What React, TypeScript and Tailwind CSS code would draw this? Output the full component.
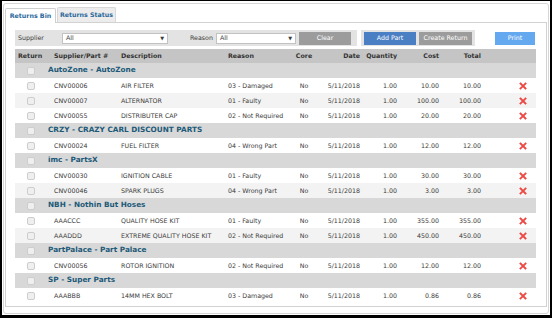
import React from "react";

type Item = {
  part: string;
  desc: string;
  reason: string;
  cost: string;
};

type Group = {
  name: string;
  items: Item[];
};

const groups: Group[] = [
  {
    name: "AutoZone - AutoZone",
    items: [
      { part: "CNV00006", desc: "AIR FILTER", reason: "03 - Damaged", cost: "10.00" },
      { part: "CNV00007", desc: "ALTERNATOR", reason: "01 - Faulty", cost: "100.00" },
      { part: "CNV00055", desc: "DISTRIBUTER CAP", reason: "02 - Not Required", cost: "20.00" },
    ],
  },
  {
    name: "CRZY - CRAZY CARL DISCOUNT PARTS",
    items: [{ part: "CNV00024", desc: "FUEL FILTER", reason: "04 - Wrong Part", cost: "12.00" }],
  },
  {
    name: "imc - PartsX",
    items: [
      { part: "CNV00030", desc: "IGNITION CABLE", reason: "01 - Faulty", cost: "30.00" },
      { part: "CNV00046", desc: "SPARK PLUGS", reason: "04 - Wrong Part", cost: "3.00" },
    ],
  },
  {
    name: "NBH - Nothin But Hoses",
    items: [
      { part: "AAACCC", desc: "QUALITY HOSE KIT", reason: "01 - Faulty", cost: "355.00" },
      { part: "AAADDD", desc: "EXTREME QUALITY HOSE KIT", reason: "02 - Not Required", cost: "450.00" },
    ],
  },
  {
    name: "PartPalace - Part Palace",
    items: [{ part: "CNV00056", desc: "ROTOR IGNITION", reason: "02 - Not Required", cost: "12.00" }],
  },
  {
    name: "SP - Super Parts",
    items: [{ part: "AAABBB", desc: "14MM HEX BOLT", reason: "03 - Damaged", cost: "0.86" }],
  },
];

function Check() {
  return <span className="block w-[8px] h-[8px] rounded-[2px] border border-[#cdcdcd] bg-[#efefef]"></span>;
}

function RedX() {
  return (
    <svg width="8" height="8" viewBox="0 0 8 8">
      <path d="M1.5 1.5 L6.5 6.5 M6.5 1.5 L1.5 6.5" stroke="#ec4a44" strokeWidth="1.9" strokeLinecap="square" />
    </svg>
  );
}

function Select({ width }: { width: string }) {
  return (
    <div className={`${width} h-[11px] bg-white border border-[#c2c2c2] flex items-center justify-between px-[3px]`}>
      <span>All</span>
      <span className="text-[5px] leading-none">▼</span>
    </div>
  );
}

export default function App() {
  return (
    <div
      className="w-[552px] h-[318px] bg-white border-t border-l-2 border-r-2 border-b-[3px] border-black pt-[2px] pl-px pr-px pb-px text-[6.3px] text-[#3a3a3a]"
      style={{ fontFamily: '"DejaVu Sans", Verdana, sans-serif' }}
    >
      <div className="w-[546px] h-[311px] border border-[#d6d6d6] rounded-[3px] pt-[3px] pl-px">
        {/* tabs */}
        <div className="flex h-[15px] items-end">
          <div className="h-[15px] w-[51px] border border-b-0 border-[#cfcfcf] bg-white rounded-t-[2px] flex items-center justify-center font-bold text-[#2a6a9c] relative top-px">
            Returns Bin
          </div>
          <div className="h-[15px] w-[59px] ml-px border border-b-0 border-[#d8d8d8] bg-[#ececec] rounded-t-[2px] flex items-center justify-center font-bold text-[#2a6a9c]">
            Returns Status
          </div>
        </div>

        {/* panel */}
        <div className="w-[542px] h-[285px] border border-[#d2d2d2] pt-[7px] pl-[9px]">
          {/* filter bar */}
          <div className="flex items-center h-[16px]">
            <div className="flex items-center h-[16px] w-[342px] bg-[#e3e3e3] pl-[3px]">
              <span className="w-[44px]">Supplier</span>
              <Select width="w-[106px]" />
              <span className="ml-[22px] w-[26px]">Reason</span>
              <Select width="w-[80px]" />
              <div className="ml-[3px] w-[52px] h-[13px] bg-[#9c9c9c] text-white flex items-center justify-center">Clear</div>
            </div>
            <div className="ml-[4px] flex items-center gap-[3px] h-[16px] w-[114px] bg-[#e3e3e3] pl-[3px]">
              <div className="w-[52px] h-[13px] bg-[#4b7fc4] text-white flex items-center justify-center">Add Part</div>
              <div className="w-[53px] h-[13px] bg-[#9c9c9c] text-white flex items-center justify-center">Create Return</div>
            </div>
            <div className="ml-[20px] w-[40px] h-[13px] bg-[#64a9f0] text-white flex items-center justify-center">Print</div>
          </div>

          {/* table */}
          <div className="mt-[3px] w-[521px]">
            <div className="flex items-center h-[14px] bg-[#c5c5c5] font-bold text-[#333]">
              <div className="w-[31px] pl-[3px]">Return</div>
              <div className="w-[71px] pl-[8px]">Supplier/Part #</div>
              <div className="w-[107px] pl-[4px]">Description</div>
              <div className="w-[66px] pl-[4px]">Reason</div>
              <div className="w-[28px] text-center">Core</div>
              <div className="w-[43px] text-right pr-px">Date</div>
              <div className="w-[37px] text-right pr-px">Quantity</div>
              <div className="w-[42px] text-right pr-px">Cost</div>
              <div className="w-[42px] text-right pr-px">Total</div>
              <div className="w-[54px]"></div>
            </div>
            {groups.map((g) => (
              <div key={g.name}>
                <div className="flex items-center h-[15px] bg-[#d8d8d8]">
                  <div className="w-[31px] flex justify-center">
                    <Check />
                  </div>
                  <div className="pl-[2px] font-bold text-[7.3px] text-[#1d5a78]">{g.name}</div>
                </div>
                {g.items.map((it, i) => (
                  <div key={it.part} className={`flex items-center h-[15px] ${i % 2 === 1 ? "bg-[#f3f3f3]" : "bg-white"}`}>
                    <div className="w-[31px] flex justify-center">
                      <Check />
                    </div>
                    <div className="w-[71px] pl-[8px]">{it.part}</div>
                    <div className="w-[107px] pl-[4px] whitespace-nowrap">{it.desc}</div>
                    <div className="w-[66px] pl-[4px] whitespace-nowrap">{it.reason}</div>
                    <div className="w-[28px] text-center">No</div>
                    <div className="w-[43px] text-right pr-px">5/11/2018</div>
                    <div className="w-[37px] text-right pr-px">1.00</div>
                    <div className="w-[42px] text-right pr-px">{it.cost}</div>
                    <div className="w-[42px] text-right pr-px">{it.cost}</div>
                    <div className="w-[54px] pl-[37px] flex items-center">
                      <RedX />
                    </div>
                  </div>
                ))}
              </div>
            ))}
          </div>
        </div>
      </div>
    </div>
  );
}
